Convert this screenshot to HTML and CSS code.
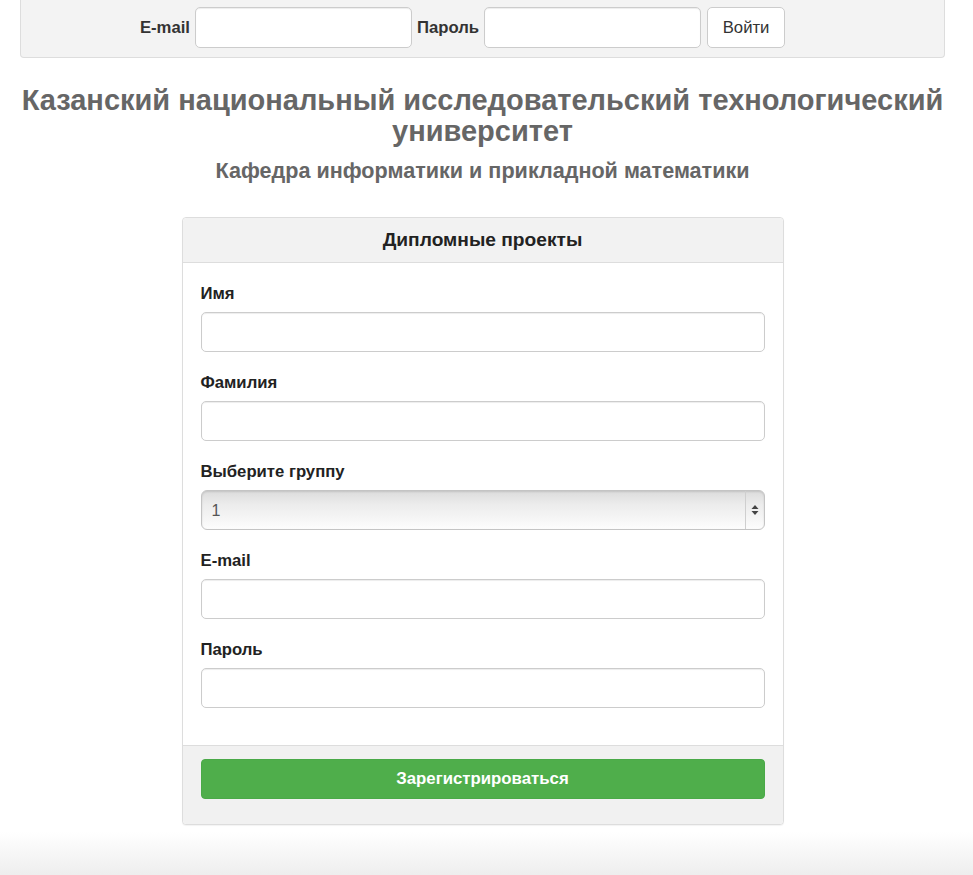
FILE: index.html
```html
<!DOCTYPE html>
<html lang="ru">
<head>
<meta charset="utf-8">
<title>Дипломные проекты</title>
<link rel="stylesheet" href="styles.css">
</head>
<body>
<div class="page">
  <form class="topbar">
    <label class="top-label" for="le">E-mail</label>
    <input class="top-input" id="le" type="text">
    <label class="top-label" for="lp">Пароль</label>
    <input class="top-input" id="lp" type="password">
    <button class="btn-login" type="button">Войти</button>
  </form>

  <h1 class="title">Казанский национальный исследовательский технологический университет</h1>
  <h2 class="subtitle">Кафедра информатики и прикладной математики</h2>

  <div class="panel">
    <div class="panel-head">Дипломные проекты</div>
    <div class="panel-body">
      <div class="group">
        <label class="lbl" for="f1">Имя</label>
        <input class="field" id="f1" type="text">
      </div>
      <div class="group">
        <label class="lbl" for="f2">Фамилия</label>
        <input class="field" id="f2" type="text">
      </div>
      <div class="group">
        <label class="lbl" for="f3">Выберите группу</label>
        <div class="select-wrap">
          <select class="select" id="f3"><option>1</option><option>2</option></select>
          <span class="select-arrows">
            <svg width="8" height="12" viewBox="0 0 8 12"><path d="M4 1 L7.5 5 H0.5 Z" fill="#444"/><path d="M4 11 L7.5 7 H0.5 Z" fill="#444"/></svg>
          </span>
        </div>
      </div>
      <div class="group">
        <label class="lbl" for="f4">E-mail</label>
        <input class="field" id="f4" type="text">
      </div>
      <div class="group">
        <label class="lbl" for="f5">Пароль</label>
        <input class="field" id="f5" type="password">
      </div>
    </div>
    <div class="panel-foot">
      <button class="btn-success" type="button">Зарегистрироваться</button>
    </div>
  </div>
</div>
<div class="page-bottom"></div>
</body>
</html>
```

FILE: styles.css
```css
html, body {
  margin: 0;
  padding: 0;
  background: #ffffff;
}
body {
  font-family: "Liberation Sans", Arial, Helvetica, sans-serif;
  color: #333333;
  font-size: 16.7px;
}
.page {
  margin: 0 28px 0 20px;
}
.topbar {
  display: flex;
  align-items: center;
  justify-content: center;
  padding: 7px 40px 9px 0;
  background: #f3f3f3;
  border: 1px solid #dddddd;
  border-top: none;
  border-radius: 0 0 4px 4px;
  margin: 0;
}
.top-label {
  font-weight: bold;
  font-size: 16.7px;
  color: #333;
  margin-right: 5px;
}
.top-input {
  width: 217px;
  height: 41px;
  box-sizing: border-box;
  border: 1px solid #cccccc;
  border-radius: 5px;
  background: #fff;
  box-shadow: inset 0 1px 1px rgba(0,0,0,0.075);
  margin-right: 5px;
  padding: 0 12px;
  font-size: 16px;
}
.btn-login {
  height: 41px;
  width: 78px;
  box-sizing: border-box;
  border: 1px solid #cccccc;
  border-radius: 5px;
  background: #ffffff;
  color: #333;
  font-family: "Liberation Sans", Arial, sans-serif;
  font-size: 16.7px;
  padding: 0;
  margin-left: 1px;
}
.title {
  margin: 27px 0 0;
  text-align: center;
  font-size: 29px;
  line-height: 31px;
  font-weight: bold;
  color: #666666;
}
.subtitle {
  margin: 12px 0 0;
  text-align: center;
  font-size: 21.6px;
  line-height: 23px;
  font-weight: bold;
  color: #666666;
}
.panel {
  width: 600px;
  margin: 35px auto 0;
  border: 1px solid #dddddd;
  border-radius: 4px;
  background: #fff;
  box-shadow: 0 1px 1px rgba(0,0,0,0.05);
}
.panel-head {
  background: #f2f2f2;
  border-bottom: 1px solid #dddddd;
  border-radius: 4px 4px 0 0;
  text-align: center;
  font-weight: bold;
  font-size: 19.2px;
  line-height: 24px;
  color: #222;
  padding: 10px 18px 10px;
}
.panel-body {
  padding: 18px 18px 19px;
}
.group {
  margin-bottom: 18px;
  display: flex;
  flex-direction: column;
}
.lbl {
  font-weight: bold;
  font-size: 16.7px;
  line-height: 25px;
  margin-bottom: 6px;
  color: #222;
}
.field {
  height: 40px;
  box-sizing: border-box;
  border: 1px solid #cccccc;
  border-radius: 5px;
  box-shadow: inset 0 1px 1px rgba(0,0,0,0.075);
  background: #fff;
  padding: 0 12px;
  font-size: 16px;
  margin: 0;
}
.select-wrap {
  position: relative;
  height: 40px;
}
.select {
  -webkit-appearance: none;
  appearance: none;
  width: 100%;
  height: 40px;
  box-sizing: border-box;
  border: 1px solid #c4c4c4;
  border-radius: 6px;
  background: linear-gradient(#dcdcdc 0%, #ececec 35%, #f6f6f6 75%, #fdfdfd 100%);
  box-shadow: inset 0 1px 2px rgba(0,0,0,0.12);
  color: #555;
  font-family: "Liberation Sans", Arial, sans-serif;
  font-size: 16px;
  padding: 0 10px;
  margin: 0;
}
.select-arrows {
  position: absolute;
  top: 1px;
  right: 1px;
  bottom: 1px;
  width: 18px;
  border-left: 1px solid #cfcfcf;
  display: flex;
  align-items: center;
  justify-content: center;
  pointer-events: none;
}
.panel-foot {
  background: #f1f1f1;
  border-top: 1px solid #dddddd;
  border-radius: 0 0 4px 4px;
  padding: 13px 18px 25px;
}
.btn-success {
  display: block;
  width: 100%;
  height: 40px;
  border: 1px solid #4aa948;
  border-radius: 4px;
  background: #4fae4b;
  color: #ffffff;
  font-family: "Liberation Sans", Arial, sans-serif;
  font-weight: bold;
  font-size: 16.8px;
  padding: 0;
}
.page-bottom {
  margin-top: 7px;
  height: 45px;
  background: linear-gradient(#ffffff, #ededed);
}
```
